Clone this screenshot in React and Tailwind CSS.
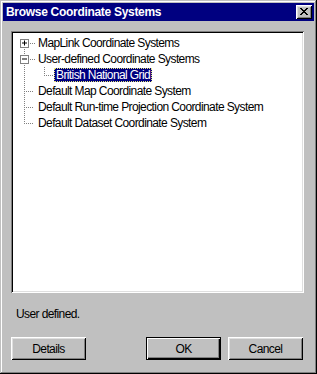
import React from "react";

const DOT = "#808080";

function VDots({ x, y1, y2 }) {
  const cells = [];
  for (let y = y1; y < y2; y += 2) cells.push(<rect key={"v" + x + "-" + y} x={x} y={y} width="1" height="1" fill={DOT} />);
  return <>{cells}</>;
}
function HDots({ y, x1, x2 }) {
  const cells = [];
  for (let x = x1; x < x2; x += 2) cells.push(<rect key={"h" + y + "-" + x} x={x} y={y} width="1" height="1" fill={DOT} />);
  return <>{cells}</>;
}

function Expander({ open }) {
  return (
    <>
      <rect x="7.5" y="3.5" width="8" height="8" fill="#fff" stroke="#808080" strokeWidth="1" shapeRendering="crispEdges" />
      <rect x="9" y="7" width="5" height="1" fill="#000" />
      {!open && <rect x="11" y="5" width="1" height="5" fill="#000" />}
    </>
  );
}

function Row({ kind, children }) {
  if (kind === "child") {
    return (
      <div className="flex h-[16px] items-center whitespace-nowrap">
        <svg width="41" height="16" className="shrink-0">
          <VDots x={11} y1={0} y2={16} />
          <VDots x={31} y1={0} y2={8} />
          <HDots y={8} x1={31} x2={40} />
        </svg>
        <span className="flex h-[14px] items-center bg-[#000080] border border-dotted border-[#e8e878] px-[1px] text-white leading-none">
          {children}
        </span>
      </div>
    );
  }
  return (
    <div className="flex h-[16px] items-center whitespace-nowrap">
      <svg width="24" height="16" className="shrink-0">
        {kind === "first" && (
          <>
            <VDots x={11} y1={12} y2={16} />
            <HDots y={8} x1={17} x2={22} />
            <g transform="translate(0,0.5)"><Expander open={false} /></g>
          </>
        )}
        {kind === "open" && (
          <>
            <VDots x={11} y1={0} y2={4} />
            <VDots x={11} y1={12} y2={16} />
            <HDots y={8} x1={17} x2={22} />
            <g transform="translate(0,0.5)"><Expander open={true} /></g>
          </>
        )}
        {kind === "mid" && (
          <>
            <VDots x={11} y1={0} y2={16} />
            <HDots y={8} x1={11} x2={20} />
          </>
        )}
        {kind === "last" && (
          <>
            <VDots x={11} y1={0} y2={8} />
            <HDots y={8} x1={11} x2={20} />
          </>
        )}
      </svg>
      <span className="pl-[1px] leading-none text-black">{children}</span>
    </div>
  );
}

function Button({ children, isDefault, className }) {
  const base =
    "flex h-[23px] w-[75px] items-center justify-center bg-[#c0c0c0] text-black " +
    (isDefault
      ? "border border-black shadow-[inset_1px_1px_0_#fff,inset_-1px_-1px_0_#000,inset_-2px_-2px_0_#808080]"
      : "shadow-[inset_1px_1px_0_#fff,inset_-1px_-1px_0_#000,inset_2px_2px_0_#dfdfdf,inset_-2px_-2px_0_#808080]");
  return <div className={base + " " + className}>{children}</div>;
}

export default function App() {
  return (
    <div className="w-[317px] h-[374px] bg-[#c0c0c0] p-[3px] flex flex-col shadow-[inset_-1px_-1px_0_#000,inset_1px_1px_0_#c0c0c0,inset_-2px_-2px_0_#808080,inset_2px_2px_0_#fff] font-['Liberation_Sans',Arial,sans-serif] text-[12px] tracking-[-0.6px]">
      {/* Title bar */}
      <div className="h-[18px] bg-[#000080] flex items-center justify-between pl-[3px] pr-[2px]">
        <span className="font-bold text-[12px] tracking-[-0.3px] text-white leading-none whitespace-nowrap">
          Browse Coordinate Systems
        </span>
        <div className="w-[16px] h-[14px] bg-[#c0c0c0] flex items-center justify-center shadow-[inset_1px_1px_0_#fff,inset_-1px_-1px_0_#000,inset_2px_2px_0_#dfdfdf,inset_-2px_-2px_0_#808080]">
          <svg width="8" height="7" shapeRendering="crispEdges" className="-mt-[1px]">
            <rect x="0" y="0" width="2" height="1" fill="#000" />
            <rect x="6" y="0" width="2" height="1" fill="#000" />
            <rect x="1" y="1" width="2" height="1" fill="#000" />
            <rect x="5" y="1" width="2" height="1" fill="#000" />
            <rect x="2" y="2" width="4" height="1" fill="#000" />
            <rect x="3" y="3" width="2" height="1" fill="#000" />
            <rect x="2" y="4" width="4" height="1" fill="#000" />
            <rect x="1" y="5" width="2" height="1" fill="#000" />
            <rect x="5" y="5" width="2" height="1" fill="#000" />
            <rect x="0" y="6" width="2" height="1" fill="#000" />
            <rect x="6" y="6" width="2" height="1" fill="#000" />
          </svg>
        </div>
      </div>

      {/* Tree */}
      <div className="ml-[8px] mt-[10px] w-[293px] h-[262px] bg-white p-[2px] shadow-[inset_1px_1px_0_#808080,inset_-1px_-1px_0_#fff,inset_2px_2px_0_#000,inset_-2px_-2px_0_#dfdfdf]">
        <div className="pt-[2px] flex flex-col">
          <Row kind="first">MapLink Coordinate Systems</Row>
          <Row kind="open">User-defined Coordinate Systems</Row>
          <Row kind="child">British National Grid</Row>
          <Row kind="mid">Default Map Coordinate System</Row>
          <Row kind="mid">Default Run-time Projection Coordinate System</Row>
          <Row kind="last">Default Dataset Coordinate System</Row>
        </div>
      </div>

      {/* Status */}
      <div className="ml-[13px] mt-[13px] h-[15px] flex items-center leading-none text-black whitespace-nowrap">User defined.</div>

      {/* Buttons */}
      <div className="mt-[16px] flex">
        <Button className="ml-[8px]">Details</Button>
        <Button isDefault className="ml-[60px]">OK</Button>
        <Button className="ml-[7px]">Cancel</Button>
      </div>
    </div>
  );
}
